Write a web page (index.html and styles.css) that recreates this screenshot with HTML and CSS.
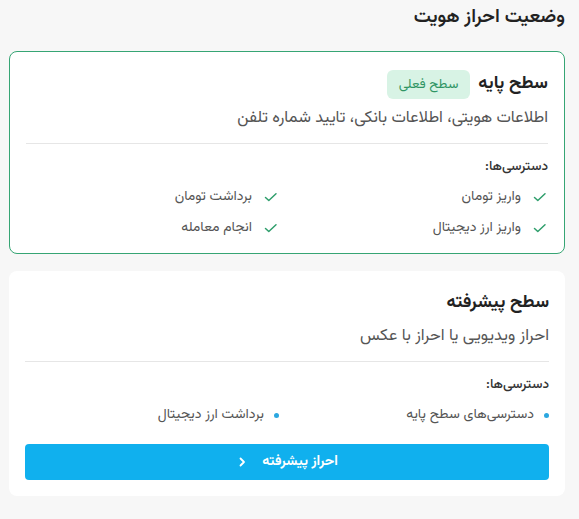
FILE: index.html
```html
<!DOCTYPE html>
<html lang="fa" dir="rtl">
<head>
<meta charset="utf-8">
<title>وضعیت احراز هویت</title>
<link rel="stylesheet" href="styles.css">
</head>
<body>
<main class="page">
  <h1 class="page-title">وضعیت احراز هویت</h1>

  <section class="level-card level-card--current">
    <div class="level-head">
      <h2 class="level-title">سطح پایه</h2>
      <span class="badge">سطح فعلی</span>
    </div>
    <p class="level-desc">اطلاعات هویتی، اطلاعات بانکی، تایید شماره تلفن</p>
    <hr class="divider">
    <div class="perm-label">دسترسی‌ها:</div>
    <ul class="perm-list">
      <li class="perm"><svg class="check" viewBox="0 0 16 16" width="16" height="16"><path d="M2.5 8.5 L5.8 11.5 L13 4.8" fill="none" stroke="#2f9e6c" stroke-width="1.5" stroke-linecap="round" stroke-linejoin="round"/></svg><span>واریز تومان</span></li>
      <li class="perm"><svg class="check" viewBox="0 0 16 16" width="16" height="16"><path d="M2.5 8.5 L5.8 11.5 L13 4.8" fill="none" stroke="#2f9e6c" stroke-width="1.5" stroke-linecap="round" stroke-linejoin="round"/></svg><span>برداشت تومان</span></li>
      <li class="perm"><svg class="check" viewBox="0 0 16 16" width="16" height="16"><path d="M2.5 8.5 L5.8 11.5 L13 4.8" fill="none" stroke="#2f9e6c" stroke-width="1.5" stroke-linecap="round" stroke-linejoin="round"/></svg><span>واریز ارز دیجیتال</span></li>
      <li class="perm"><svg class="check" viewBox="0 0 16 16" width="16" height="16"><path d="M2.5 8.5 L5.8 11.5 L13 4.8" fill="none" stroke="#2f9e6c" stroke-width="1.5" stroke-linecap="round" stroke-linejoin="round"/></svg><span>انجام معامله</span></li>
    </ul>
  </section>

  <section class="level-card">
    <div class="level-head level-head--plain">
      <h2 class="level-title">سطح پیشرفته</h2>
    </div>
    <p class="level-desc">احراز ویدیویی یا احراز با عکس</p>
    <hr class="divider">
    <div class="perm-label">دسترسی‌ها:</div>
    <ul class="perm-list perm-list--dots">
      <li class="perm"><span class="dot"></span><span>دسترسی‌های سطح پایه</span></li>
      <li class="perm"><span class="dot"></span><span>برداشت ارز دیجیتال</span></li>
    </ul>
    <button class="btn-primary" type="button">
      <span>احراز پیشرفته</span>
      <svg class="chev" viewBox="0 0 12 12" width="12" height="12"><path d="M4.5 2.5 L8 6 L4.5 9.5" fill="none" stroke="#fff" stroke-width="1.8" stroke-linecap="round" stroke-linejoin="round"/></svg>
    </button>
  </section>
</main>
</body>
</html>
```

FILE: styles.css
```css
* { box-sizing: border-box; }

html, body {
  margin: 0;
  padding: 0;
  background: #f7f7f7;
}

body {
  font-family: "Vazirmatn", "Noto Sans Arabic", "Noto Naskh Arabic", "DejaVu Sans", sans-serif;
  color: #222;
}

.page {
  padding: 4px 14px 0 9px;
}

.page-title {
  margin: 0 0 19px 0;
  font-size: 19px;
  font-weight: 600;
  line-height: 28px;
  color: #222;
}

.level-card {
  background: #fff;
  border-radius: 8px;
  padding: 16px;
  margin-bottom: 17px;
}

.level-card--current {
  border: 1px solid #36a574;
  padding-bottom: 13px;
}

.level-head {
  display: flex;
  align-items: center;
  gap: 8px;
  height: 32px;
}

.level-head--plain {
  height: 31px;
}

.level-title {
  margin: 0;
  font-size: 18px;
  font-weight: 700;
  color: #222;
}

.badge {
  background: #d8f3e5;
  color: #2f9564;
  font-size: 13.5px;
  line-height: 29px;
  height: 29px;
  padding: 0 12px;
  border-radius: 6px;
}

.level-desc {
  margin: 5px 0 0 0;
  font-size: 16.4px;
  line-height: 26px;
  color: #555;
}

.divider {
  border: 0;
  border-top: 1px solid #e6e6e6;
  margin: 12px 0 0 0;
}

.perm-label {
  margin-top: 12px;
  font-size: 13.5px;
  font-weight: 500;
  line-height: 22px;
  color: #333;
}

.perm-list {
  list-style: none;
  margin: 7px 0 0 0;
  padding: 0;
  display: grid;
  grid-template-columns: 1fr 1fr;
  column-gap: 16px;
  row-gap: 7px;
}

.perm {
  display: flex;
  align-items: center;
  gap: 11px;
  font-size: 14px;
  line-height: 24px;
  color: #555;
}

.perm-list--dots .perm {
  gap: 10px;
}

.check {
  flex: none;
}

.dot {
  flex: none;
  width: 5px;
  height: 5px;
  border-radius: 50%;
  background: #2ba7e0;
}

.btn-primary {
  margin-top: 17px;
  width: 100%;
  height: 36px;
  border: 0;
  border-radius: 4px;
  background: #10b0ee;
  color: #fff;
  font-family: inherit;
  font-size: 14px;
  font-weight: 700;
  display: flex;
  align-items: center;
  justify-content: center;
  gap: 14px;
}

.chev {
  flex: none;
}
```
